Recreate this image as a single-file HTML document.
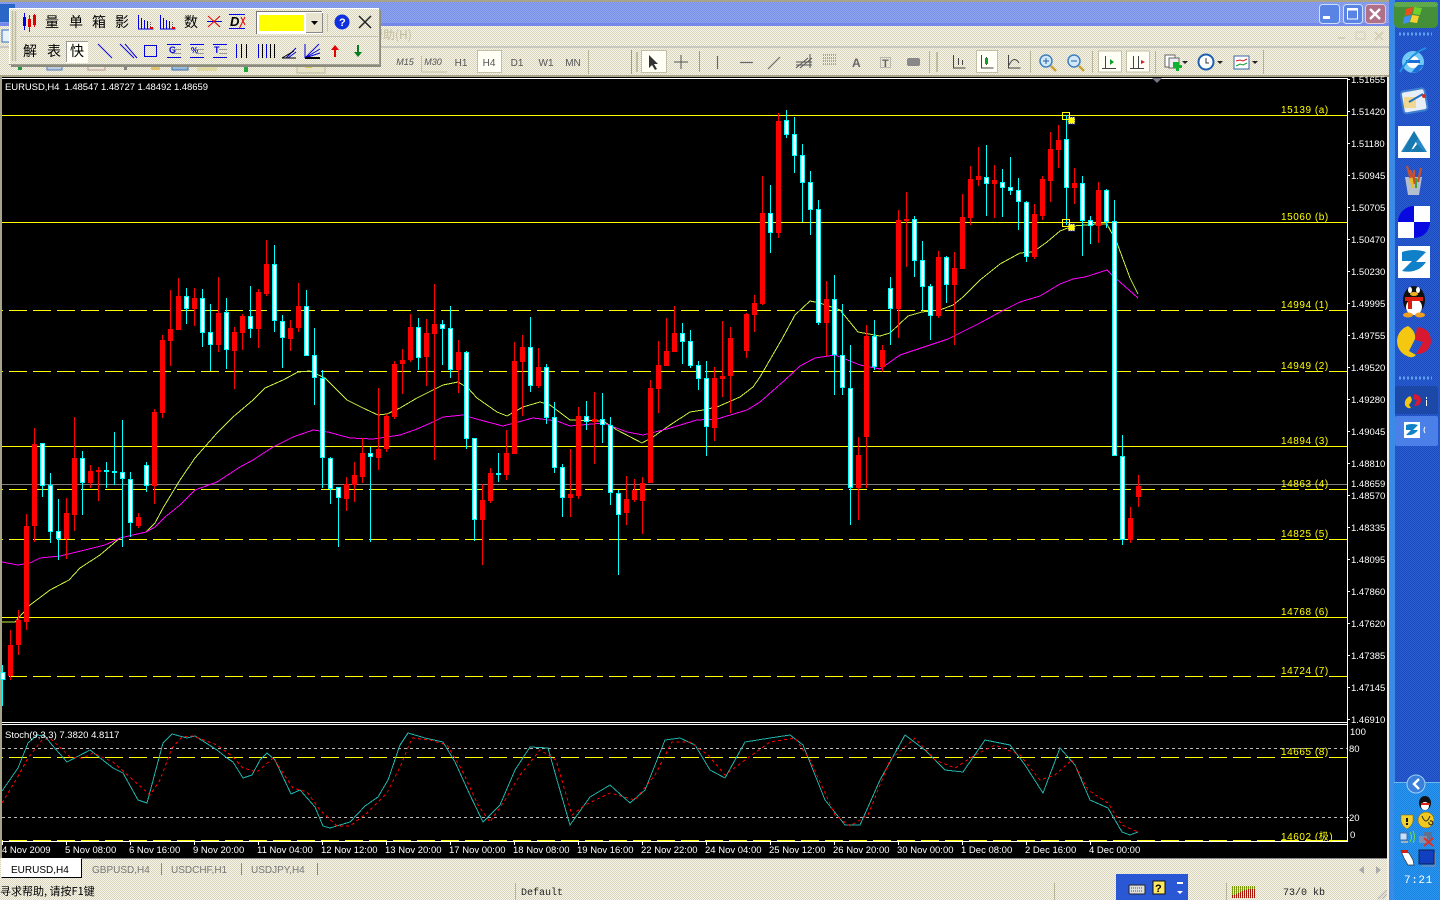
<!DOCTYPE html>
<html><head><meta charset="utf-8"><title>MetaTrader EURUSD,H4</title>
<style>html,body{margin:0;padding:0;background:#000;width:1440px;height:900px;overflow:hidden}svg{display:block}
text{font-family:"Liberation Sans","Noto Sans CJK SC",sans-serif;font-size:9.5px}
.a text{fill:#fff}.y text{fill:#ff0;font-size:10px;letter-spacing:.55px}.c text{font-family:"Noto Sans CJK SC","WenQuanYi Zen Hei",sans-serif;font-size:14px;fill:#000;text-anchor:middle}
.t text{font-size:10px;fill:#555;text-anchor:middle}
.m text{font-family:"Liberation Mono",monospace;font-size:10px;fill:#222}
</style></head><body>
<svg width="1440" height="900" viewBox="0 0 1440 900" xmlns="http://www.w3.org/2000/svg">
<defs>
<pattern id="d" width="2" height="2" patternUnits="userSpaceOnUse"><rect width="2" height="2" fill="#f8f6ea"/><rect width="1" height="1" fill="#d8d4bc"/><rect x="1" y="1" width="1" height="1" fill="#d8d4bc"/></pattern>
<pattern id="b" width="2" height="2" patternUnits="userSpaceOnUse"><rect width="2" height="2" fill="#8ca6ee"/><rect width="1" height="1" fill="#7b90e6"/><rect x="1" y="1" width="1" height="1" fill="#7b90e6"/></pattern>
<pattern id="k" width="2" height="2" patternUnits="userSpaceOnUse"><rect width="2" height="2" fill="#2a5ed0"/><rect width="1" height="1" fill="#1c4cc0"/><rect x="1" y="1" width="1" height="1" fill="#1c4cc0"/></pattern>
<pattern id="r" width="2" height="2" patternUnits="userSpaceOnUse"><rect width="2" height="2" fill="#2a96ee"/><rect width="1" height="1" fill="#1a82e0"/><rect x="1" y="1" width="1" height="1" fill="#1a82e0"/></pattern>
</defs>
<!-- window chrome -->
<rect width="1440" height="900" fill="url(#d)"/>
<rect width="1390" height="2" fill="#a8a488"/>
<rect y="2" width="1390" height="24" fill="url(#b)"/>
<rect y="23" width="1390" height="3" fill="#7488ec"/>
<rect y="46" width="1390" height="2" fill="#c8c8c0"/>
<rect y="75" width="1390" height="2" fill="#a8a488"/>
<rect x="0" y="4" width="15" height="18" fill="#2a66c8"/>
<rect x="2" y="30" width="12" height="12" fill="#e8f0f8" stroke="#3070c0"/>
<text x="371" y="39" style="font-family:'Noto Sans CJK SC',sans-serif;font-size:12px;fill:#c0bc9c">帮助(H)</text>
<!-- window buttons -->
<rect x="1319.5" y="4.5" width="20" height="19" rx="3" fill="#5a84e4" stroke="#cfe0fa"/><rect x="1323" y="16" width="7" height="3" fill="#fff"/>
<rect x="1343.5" y="4.5" width="19" height="19" rx="3" fill="#5a84e4" stroke="#cfe0fa"/><rect x="1347.5" y="9" width="10" height="10" fill="none" stroke="#fff"/><rect x="1347" y="8" width="11" height="2.5" fill="#fff"/>
<rect x="1365.5" y="4.5" width="20" height="19" rx="3" fill="#b07088" stroke="#e0c8d8"/><path d="M1370 9l10 10M1380 9l-10 10" stroke="#fff" stroke-width="2.4"/>
<g fill="#d4d0b8"><rect x="1338" y="37" width="7" height="2"/><rect x="1356" y="32" width="9" height="7" fill="none" stroke="#d4d0b8"/><path d="M1375 32l8 8M1383 32l-8 8" stroke="#d4d0b8" stroke-width="2"/></g>
<!-- toolbar under floating -->
<g fill="#555" opacity=".9">
<rect x="18" y="65" width="4" height="5" fill="#0a9030"/><rect x="47" y="65" width="15" height="5" fill="#b8c8e0" stroke="#4070b0"/><rect x="88" y="65" width="17" height="5" fill="#f0e8e0" stroke="#b09080"/><rect x="124" y="65" width="3" height="5" fill="#777"/><rect x="151" y="65" width="9" height="5" fill="#e0c060"/><rect x="172" y="65" width="16" height="5" fill="#90b8e0" stroke="#3060a0"/><rect x="197" y="65" width="20" height="6" fill="#e0d8a0"/><rect x="244" y="65" width="4" height="7" fill="#10a030"/><rect x="237" y="65" width="16" height="2" fill="#10a030"/><rect x="297" y="65" width="28" height="8" fill="#e8e4c8" stroke="#b8b498"/><rect x="305" y="65" width="7" height="3" fill="#e0c040"/></g>
<g class="t">
<path d="M421.5 72V56M421.5 72H447" stroke="#c4c0a8" fill="none"/>
<text x="405" y="65" style="font-style:italic;font-size:9px">M15</text><text x="433" y="65" style="font-style:italic;font-size:9px">M30</text>
<text x="461" y="66">H1</text><rect x="477.5" y="50.5" width="24" height="22" fill="#fffff6" stroke="#c4c0a8"/><text x="489" y="66">H4</text><text x="517" y="66">D1</text><text x="546" y="66">W1</text><text x="573" y="66">MN</text>
</g>
<rect x="588" y="50" width="1" height="24" fill="#b8b498"/><rect x="631" y="50" width="1" height="24" fill="#999"/>
<rect x="636" y="52" width="2" height="20" fill="#c0bca0"/>
<rect x="641.5" y="50.5" width="25" height="22" fill="#fffff6" stroke="#c4c0a8"/>
<path d="M649 55l0 13 3-3 3 5 2-1-3-5 4 0z" fill="#333"/>
<path d="M681 55v14M674 62h14" stroke="#555"/>
<rect x="699" y="51" width="1" height="21" fill="#999"/>
<path d="M717.5 56v13M740 62.5h13M768 69l12-12" stroke="#666" stroke-width="1.2"/>
<path d="M796 68l12-10M800 68l12-10M796 62h16M796 65h16M810 54v14" stroke="#555" fill="none"/>
<path d="M823 55h13M823 58h13M823 61h13M823 64h13" stroke="#666" stroke-dasharray="1 1"/>
<text x="852" y="67" style="font-size:12px;font-weight:bold;fill:#666">A</text>
<rect x="880.5" y="57.5" width="10" height="10" fill="none" stroke="#888" stroke-dasharray="1 1"/><text x="882" y="67" style="font-size:11px;font-weight:bold;fill:#666">T</text>
<rect x="907" y="58" width="13" height="8" rx="2" fill="#888"/>
<rect x="929" y="51" width="1" height="22" fill="#b8b498"/><rect x="936" y="52" width="2" height="20" fill="#c0bca0"/>
<path d="M953.5 55v13h12M958.5 58v7M962.5 60v5" stroke="#444" fill="none"/>
<rect x="976.5" y="50.5" width="21" height="22" fill="#fffff6" stroke="#c4c0a8"/><path d="M981.5 55v13h12M986.5 57v8" stroke="#444" fill="none"/><rect x="985" y="58" width="3" height="6" fill="#10a030"/>
<path d="M1008.500 55v13h12M1009 65q5-10 10-2" stroke="#444" fill="none"/>
<rect x="1030" y="51" width="1" height="22" fill="#b8b498"/>
<circle cx="1046" cy="61" r="6" fill="#d0e8f8" stroke="#4080c0" stroke-width="1.5"/><path d="M1051 66l5 5" stroke="#c8a030" stroke-width="2.5"/><path d="M1043 61h6M1046 58v6" stroke="#2060a0"/>
<circle cx="1074" cy="61" r="6" fill="#d0e8f8" stroke="#4080c0" stroke-width="1.5"/><path d="M1079 66l5 5" stroke="#c8a030" stroke-width="2.5"/><path d="M1071 61h6" stroke="#2060a0"/>
<rect x="1092" y="51" width="1" height="22" fill="#b8b498"/>
<rect x="1098.5" y="51" width="23" height="21" fill="#fffff6" stroke="#c4c0a8"/><path d="M1105.5 56v12M1102 68.5h14" stroke="#444" fill="none"/><path d="M1110 59l4 3-4 3z" fill="#10a030"/>
<rect x="1126.5" y="51" width="23" height="21" fill="#fffff6" stroke="#c4c0a8"/><path d="M1133.5 56v12M1138.5 56v12M1130 68.5h14" stroke="#444" fill="none"/><path d="M1145 62l-4-2v4z" fill="#d02020"/>
<rect x="1155" y="51" width="1" height="22" fill="#b8b498"/>
<rect x="1165" y="55" width="10" height="12" fill="#fff" stroke="#666"/><rect x="1169" y="58" width="10" height="10" fill="#eee" stroke="#666"/><path d="M1173 62h6v3h3v3h-3v3h-3v-3h-3z" fill="#10b030"/><path d="M1182 61h6l-3 3z" fill="#222"/>
<circle cx="1206" cy="62" r="7.5" fill="#fff" stroke="#2060b0" stroke-width="2"/><path d="M1206 58v5h3" stroke="#333" fill="none"/><path d="M1217 61h6l-3 3z" fill="#222"/>
<rect x="1234" y="56" width="15" height="13" fill="#fff" stroke="#3868a0"/><path d="M1236 61l4-1 3 1 4-2" stroke="#d02020" fill="none"/><path d="M1236 66l4-2 3 1 4-2" stroke="#10a030" fill="none"/><path d="M1252 61h6l-3 3z" fill="#222"/>
<rect x="1263" y="50" width="1" height="24" fill="#b0b0a0"/>

<!-- black chart window -->
<rect x="0" y="77" width="2" height="781" fill="#a8a488"/>
<rect x="2" y="77" width="1385" height="781" fill="#000"/>
<rect x="2" y="78" width="1346" height="1" fill="#fff"/>
<rect x="1347" y="78" width="1" height="764" fill="#fff"/>
<rect x="2" y="722" width="1346" height="1" fill="#fff"/><rect x="2" y="724" width="1346" height="1" fill="#fff"/>
<rect x="2" y="841" width="1346" height="1" fill="#fff"/>
<path d="M1152 78h10l-5 5z" fill="#778"/>

<!-- horizontal levels -->
<g shape-rendering="crispEdges" fill="none">
<path d="M2 484.5H1347" stroke="#808080"/>
<path d="M2 115.5H1347M2 222.5H1347M2 446.5H1347M2 617.5H1347" stroke="#ff0"/>
<path d="M9 310.5H1347M9 371.5H1347M9 489.5H1347M9 539.5H1347M9 676.5H1347M9 757.5H1347M9 840.5H1347" stroke="#ff0" stroke-dasharray="18 6"/>
<path d="M2 310.500h1M2 371.500h1M2 489.500h1M2 539.500h1M2 676.500h1M2 757.500h1M2 840.500h1" stroke="#ff0"/>
<path d="M2 748.5H1347M2 817.5H1347" stroke="#bbb" stroke-dasharray="3 3"/>
</g>

<!-- moving averages -->
<g fill="none" stroke-width="1" shape-rendering="crispEdges">
<path stroke="#c8f040" d="M2 622L15 622 30 605 50 590 69 580 80 568 100 555 120 538 146 532 155 523 163 508 180 480 195 458 217 433 233 417 253 400 265 388 283 380 298 372 310 371 325 378 347 400 363 408 378 415 387 414 400 408 417 398 433 390 443 385 458 382 468 388 477 398 497 412 507 416 523 407 540 402 550 405 570 420 603 421 617 430 642 443 653 437 670 425 690 412 703 410 717 407 740 397 753 387 760 377 782 339 795 315 810 301 820 303 840 310 858 332 880 336 890 333 908 316 922 312 940 310 953 305 963 297 980 280 1000 264 1020 253 1033 252 1047 242 1060 231 1073 226 1097 224 1107 224 1117 243 1130 278 1138 294"/>
<path stroke="#ff00ff" d="M2 562L18 565 30 563 40 558 60 556 85 550 105 545 120 538 146 532 155 527 165 517 180 505 195 490 217 482 240 467 253 460 273 447 293 437 313 430 328 432 350 438 373 439 400 435 417 429 433 422 443 417 463 415 480 420 503 426 533 418 557 421 570 426 603 423 627 432 643 435 667 429 697 420 717 419 747 410 760 402 785 380 800 366 815 358 835 355 860 365 880 369 900 355 930 345 948 339 980 323 1000 312 1020 302 1040 296 1060 284 1073 279 1085 277 1107 270 1112 275 1138 298"/>
</g>

<!-- candles -->
<g shape-rendering="crispEdges">
<path stroke="#f00" fill="none" d="M10.5 630V680M18.5 610V655M26.5 514V630M34.5 428V542M66.5 498V559M74.5 417V531M90.5 465V488M98.5 467V501M138.5 513V528M154.5 409V504M162.5 335V418M170.5 290V366M178.5 278V330M194.5 288V326M218.5 277V352M234.5 327V389M242.5 314V350M258.5 289V348M266.5 240V296M290.5 320V351M298.5 283V332M346.5 477V511M354.5 462V502M362.5 438V483M378.5 388V470M386.5 414V452M394.5 361V419M402.5 349V394M410.5 314V362M426.5 319V386M434.5 284V460M458.5 340V393M482.5 484V565M490.5 468V503M506.5 430V480M514.5 342V454M522.5 335V416M538.5 348V388M570.5 449V517M578.5 407V499M594.5 392V464M626.5 476V525M634.5 479V502M642.5 477V534M650.5 380V483M658.5 341V413M666.5 318V366M674.5 306V352M714.5 367V441M722.5 321V397M730.5 327V413M746.5 313V358M754.5 295V332M762.5 176V305M778.5 113V238M826.5 281V356M858.5 437V520M866.5 325V488M882.5 345V372M898.5 210V338M906.5 192V267M938.5 251V318M954.5 252V345M962.5 194V269M970.5 166V225M978.5 147V186M994.5 165V218M1034.5 204V259M1042.5 176V220M1050.5 132V202M1058.5 125V168M1074.5 168V204M1098.5 182V243M1130.5 507V543M1138.5 475V507"/>
<path stroke="#0ff" fill="none" d="M2.5 665V706M42.5 443V497M50.5 473V543M58.5 499V560M82.5 451V515M106.5 462V488M114.5 432V485M122.5 420V547M130.5 472V537M146.5 462V492M186.5 288V324M202.5 289V347M210.5 304V371M226.5 298V369M250.5 286V338M274.5 245V332M282.5 315V368M306.5 290V356M314.5 328V405M322.5 370V488M330.5 457V504M338.5 487V547M370.5 447V542M418.5 318V370M442.5 320V365M450.5 306V378M466.5 351V449M474.5 438V541M498.5 453V482M530.5 317V392M546.5 364V424M554.5 402V473M562.5 464V517M586.5 401V430M602.5 393V443M610.5 417V505M618.5 490V575M682.5 323V364M690.5 330V368M698.5 361V390M706.5 361V456M770.5 185V253M786.5 110V138M794.5 117V173M802.5 144V222M810.5 171V235M818.5 200V325M834.5 275V395M842.5 304V395M850.5 345V525M874.5 320V370M890.5 277V345M914.5 216V277M922.5 241V310M930.5 284V340M946.5 256V303M986.5 145V216M1002.5 169V217M1010.5 157V195M1018.5 178V230M1026.5 201V262M1066.5 115V225M1082.5 176V256M1090.5 216V244M1106.5 189V228M1114.5 200V456M1122.5 435V545"/>
<path fill="#f00" d="M8 645h5v31h-5zM16 620h5v25h-5zM24 526h5v96h-5zM32 444h5v82h-5zM64 513h5v26h-5zM72 458h5v57h-5zM88 471h5v12h-5zM96 470h5v2h-5zM136 517h5v9h-5zM152 412h5v74h-5zM160 340h5v73h-5zM168 329h5v12h-5zM176 296h5v34h-5zM192 298h5v11h-5zM216 313h5v32h-5zM232 332h5v19h-5zM240 316h5v17h-5zM256 292h5v37h-5zM264 264h5v30h-5zM288 328h5v11h-5zM296 306h5v22h-5zM344 484h5v15h-5zM352 475h5v10h-5zM360 453h5v24h-5zM376 449h5v9h-5zM384 416h5v33h-5zM392 364h5v53h-5zM400 360h5v4h-5zM408 327h5v33h-5zM424 333h5v24h-5zM432 324h5v10h-5zM456 352h5v18h-5zM480 500h5v20h-5zM488 473h5v28h-5zM504 453h5v22h-5zM512 361h5v93h-5zM520 347h5v15h-5zM536 367h5v19h-5zM568 494h5v4h-5zM576 416h5v80h-5zM592 419h5v3h-5zM624 499h5v14h-5zM632 490h5v10h-5zM640 483h5v18h-5zM648 388h5v95h-5zM656 365h5v24h-5zM664 351h5v15h-5zM672 333h5v19h-5zM712 378h5v50h-5zM720 376h5v3h-5zM728 338h5v38h-5zM744 314h5v37h-5zM752 303h5v12h-5zM760 213h5v91h-5zM776 121h5v112h-5zM824 299h5v24h-5zM856 455h5v33h-5zM864 336h5v101h-5zM880 350h5v17h-5zM896 220h5v89h-5zM904 219h5v2h-5zM936 257h5v59h-5zM952 268h5v17h-5zM960 217h5v52h-5zM968 179h5v39h-5zM976 176h5v4h-5zM992 180h5v4h-5zM1032 214h5v43h-5zM1040 179h5v37h-5zM1048 149h5v32h-5zM1056 140h5v10h-5zM1072 183h5v5h-5zM1096 190h5v36h-5zM1128 518h5v22h-5zM1136 486h5v11h-5z"/>
<path fill="#fff" stroke="#0ff" d="M1 672.5h4v7h-4zM40.5 443.5h4v42h-4zM48.5 485.5h4v46h-4zM56.5 531.5h4v7h-4zM80.5 458.5h4v24h-4zM104.5 470.5h4v1h-4zM112.5 471.5h4v1h-4zM120.5 472.5h4v6h-4zM128.5 479.5h4v43h-4zM144.5 465.5h4v20h-4zM184.5 296.5h4v12h-4zM200.5 298.5h4v34h-4zM208.5 332.5h4v12h-4zM224.5 312.5h4v37h-4zM248.5 316.5h4v12h-4zM272.5 264.5h4v56h-4zM280.5 321.5h4v16h-4zM304.5 306.5h4v49h-4zM312.5 355.5h4v22h-4zM320.5 378.5h4v79h-4zM328.5 458.5h4v30h-4zM336.5 487.5h4v10h-4zM368.5 453.5h4v3h-4zM416.5 327.5h4v30h-4zM440.5 324.5h4v4h-4zM448.5 328.5h4v41h-4zM464.5 352.5h4v86h-4zM472.5 438.5h4v81h-4zM496.5 473.5h4v1h-4zM528.5 347.5h4v38h-4zM544.5 367.5h4v50h-4zM552.5 417.5h4v50h-4zM560.5 467.5h4v30h-4zM584.5 416.5h4v5h-4zM600.5 419.5h4v5h-4zM608.5 425.5h4v67h-4zM616.5 493.5h4v21h-4zM680.5 333.5h4v8h-4zM688.5 341.5h4v24h-4zM696.5 365.5h4v13h-4zM704.5 378.5h4v48h-4zM768.5 213.5h4v19h-4zM784.5 120.5h4v14h-4zM792.5 134.5h4v21h-4zM800.5 155.5h4v27h-4zM808.5 182.5h4v27h-4zM816.5 209.5h4v113h-4zM832.5 299.5h4v55h-4zM840.5 355.5h4v32h-4zM848.5 388.5h4v99h-4zM872.5 336.5h4v30h-4zM888.5 288.5h4v20h-4zM912.5 219.5h4v41h-4zM920.5 260.5h4v26h-4zM928.5 286.5h4v29h-4zM944.5 257.5h4v27h-4zM984.5 177.5h4v6h-4zM1000.5 182.5h4v5h-4zM1008.5 187.5h4v3h-4zM1016.5 190.5h4v11h-4zM1024.5 202.5h4v54h-4zM1064.5 139.5h4v48h-4zM1080.5 183.5h4v37h-4zM1088.5 220.5h4v5h-4zM1104.5 190.5h4v31h-4zM1112.5 221.5h4v234h-4zM1120.5 456.5h4v83h-4z"/>
</g>
<!-- object anchors -->
<g shape-rendering="crispEdges">
<rect x="1062.5" y="112.5" width="7" height="7" fill="none" stroke="#ff0"/><rect x="1062.5" y="219.5" width="7" height="7" fill="none" stroke="#ff0"/>
<rect x="1068" y="117" width="7" height="7" fill="#ff0" stroke="#22a" stroke-dasharray="1 1"/><rect x="1068" y="224" width="7" height="7" fill="#ff0" stroke="#22a" stroke-dasharray="1 1"/>
</g>

<!-- stochastic -->
<path fill="none" stroke="#20b2aa" shape-rendering="crispEdges" d="M2 791L18 768 28 743 37 735 45 736 52 745 67 762 90 750 113 768 123 773 138 800 147 803 163 743 172 734 187 738 195 736 217 750 227 758 233 762 243 778 252 775 260 760 267 753 275 760 291 794 300 790 315 807 323 826 330 828 350 822 365 806 378 797 388 780 400 745 408 733 425 738 443 742 455 762 470 795 483 822 500 805 515 770 530 747 548 748 557 780 570 825 590 797 610 785 630 803 645 790 665 740 680 738 695 745 710 770 725 778 745 742 770 738 790 735 803 745 825 800 845 825 860 825 880 780 905 735 925 750 945 770 963 772 985 740 1010 745 1025 765 1043 793 1060 748 1075 765 1090 800 1108 808 1122 832 1130 835 1138 832"/>
<path fill="none" stroke="#f00" stroke-dasharray="3 3" shape-rendering="crispEdges" d="M2 803L17 778 28 758 42 740 50 738 70 757 83 758 93 753 113 762 133 780 150 795 160 780 172 748 182 737 193 736 217 745 233 757 243 768 257 772 273 758 293 788 307 792 320 810 337 826 350 826 367 813 387 793 400 767 412 738 430 740 447 745 462 770 478 805 490 822 505 800 520 775 540 750 556 760 572 815 585 805 610 793 635 800 655 775 672 742 690 742 708 755 725 775 745 760 770 742 795 738 810 760 835 815 850 826 868 815 890 760 915 738 935 760 955 768 975 755 995 745 1020 755 1040 780 1055 775 1072 760 1088 790 1108 803 1122 825 1138 832"/>

<!-- labels -->
<g class="a">
<text x="5" y="90" style="letter-spacing:-.06px">EURUSD,H4&#160; 1.48547 1.48727 1.48492 1.48659</text>
<text x="5" y="738">Stoch(9,3,3) 7.3820 4.8117</text>
<text x="1351" y="83">1.51655</text><text x="1351" y="115">1.51420</text><text x="1351" y="147">1.51180</text><text x="1351" y="179">1.50945</text><text x="1351" y="211">1.50705</text><text x="1351" y="243">1.50470</text><text x="1351" y="275">1.50230</text><text x="1351" y="307">1.49995</text><text x="1351" y="339">1.49755</text><text x="1351" y="371">1.49520</text><text x="1351" y="403">1.49280</text><text x="1351" y="435">1.49045</text><text x="1351" y="467">1.48810</text><text x="1351" y="487">1.48659</text><text x="1351" y="499">1.48570</text><text x="1351" y="531">1.48335</text><text x="1351" y="563">1.48095</text><text x="1351" y="595">1.47860</text><text x="1351" y="627">1.47620</text><text x="1351" y="659">1.47385</text><text x="1351" y="691">1.47145</text><text x="1351" y="723">1.46910</text>
<text x="1350" y="735">100</text><text x="1349" y="752">80</text><text x="1349" y="821">20</text><text x="1350" y="838">0</text>
<text x="2" y="853">4 Nov 2009</text><text x="65" y="853">5 Nov 08:00</text><text x="129" y="853">6 Nov 16:00</text><text x="193" y="853">9 Nov 20:00</text><text x="257" y="853">11 Nov 04:00</text><text x="321" y="853">12 Nov 12:00</text><text x="385" y="853">13 Nov 20:00</text><text x="449" y="853">17 Nov 00:00</text><text x="513" y="853">18 Nov 08:00</text><text x="577" y="853">19 Nov 16:00</text><text x="641" y="853">22 Nov 22:00</text><text x="705" y="853">24 Nov 04:00</text><text x="769" y="853">25 Nov 12:00</text><text x="833" y="853">26 Nov 20:00</text><text x="897" y="853">30 Nov 00:00</text><text x="961" y="853">1 Dec 08:00</text><text x="1025" y="853">2 Dec 16:00</text><text x="1089" y="853">4 Dec 00:00</text>
</g>
<path stroke="#fff" shape-rendering="crispEdges" d="M1347 79.5h3M1347 111.5h3M1347 143.5h3M1347 175.5h3M1347 207.5h3M1347 239.5h3M1347 271.5h3M1347 303.5h3M1347 335.5h3M1347 367.5h3M1347 399.5h3M1347 431.5h3M1347 463.5h3M1347 495.5h3M1347 527.5h3M1347 559.5h3M1347 591.5h3M1347 623.5h3M1347 655.5h3M1347 687.5h3M1347 719.5h3M1347 817.5h2M2.5 842v3M66.5 842v3M130.5 842v3M194.5 842v3M258.5 842v3M322.5 842v3M386.5 842v3M450.5 842v3M514.5 842v3M578.5 842v3M642.5 842v3M706.5 842v3M770.5 842v3M834.5 842v3M898.5 842v3M962.5 842v3M1026.5 842v3M1090.5 842v3"/>
<g class="y">
<text x="1281" y="113">15139 (a)</text><text x="1281" y="220">15060 (b)</text><text x="1281" y="308">14994 (1)</text><text x="1281" y="369">14949 (2)</text><text x="1281" y="444">14894 (3)</text><text x="1281" y="487">14863 (4)</text><text x="1281" y="537">14825 (5)</text><text x="1281" y="615">14768 (6)</text><text x="1281" y="674">14724 (7)</text><text x="1281" y="755">14665 (8)</text><text x="1281" y="840">14602 (极)</text>
</g>

<!-- bottom tabs and status -->
<rect x="0" y="858" width="1387" height="42" fill="url(#d)"/>
<rect x="1" y="858" width="80" height="20" fill="#fff"/><path d="M1.5 877.5H81.5V858" stroke="#000" fill="none"/>
<rect x="81" y="858" width="1306" height="1" fill="#888"/>
<text x="11" y="873" fill="#000" style="font-size:10px">EURUSD,H4</text>
<g style="fill:#777"><text x="92" y="873" fill="#777" style="font-size:10px">GBPUSD,H4</text><text x="171" y="873" fill="#777" style="font-size:10px">USDCHF,H1</text><text x="251" y="873" fill="#777" style="font-size:10px">USDJPY,H4</text></g>
<path d="M161.5 863v12M241.5 863v12M317.5 863v12" stroke="#888"/>
<text x="0" y="895" fill="#000" style="font-family:'Noto Sans CJK SC',sans-serif;font-size:11px">寻求帮助, 请按F1键</text>
<path d="M515.500 883v17M1054.500 883v17M1226.500 883v17" stroke="#b8b498"/>
<g class="m"><text x="521" y="895">Default</text><text x="1283" y="895">73/0 kb</text></g>
<path d="M1364 866l-5 4 5 4zM1376 866l5 4-5 4z" fill="#aaa"/>
<!-- IME bar -->
<rect x="1116" y="874" width="72" height="26" fill="#2a58d4"/>
<rect x="1129" y="885" width="16" height="9" rx="1" fill="#ddd" stroke="#222"/><path d="M1131 888h12M1131 891h12" stroke="#555" stroke-dasharray="1 1"/>
<rect x="1153" y="881" width="12" height="13" fill="#ffe860" stroke="#111"/><text x="1155" y="892" style="font-size:11px;font-weight:bold;fill:#000">?</text>
<rect x="1177" y="882" width="6" height="2" fill="#fff"/><path d="M1177 891h6l-3 3z" fill="#fff"/>
<!-- net bars -->
<g shape-rendering="crispEdges"><path d="M1232.500 886v12M1234.500 886v12M1236.500 886v12M1238.500 886v12M1240.500 886v12M1242.500 886v12M1244.500 886v12M1246.500 886v12M1248.500 886v12M1250.500 886v12M1252.500 886v12M1254.500 886v12" stroke="#7c9a10"/>
<path d="M1232.500 895v3M1234.500 895v3M1236.500 894v4M1238.500 893v5M1240.500 892v6M1242.500 891v7M1244.500 890v8M1246.500 890v8M1248.500 889v9M1250.500 889v9M1252.500 889v9M1254.500 889v9" stroke="#a81808"/></g>
<path d="M1378 899l9-9M1382 899l5-5" stroke="#aaa"/>

<!-- taskbar -->
<rect x="1387" y="77" width="3" height="823" fill="#f0f0e8"/>
<rect x="1389" y="0" width="51" height="900" fill="url(#k)"/>
<rect x="1389" y="0" width="6" height="900" fill="#3a8ae8"/>
<rect x="1394" y="782" width="46" height="118" fill="url(#r)"/>
<rect x="1394" y="782" width="46" height="1" fill="#70b8f0"/>
<rect x="1394" y="2" width="44" height="26" rx="5" fill="#458f38"/><rect x="1394" y="2" width="44" height="5" rx="3" fill="#5ea84e"/>
<path d="M1406 9l7-2-1 7-7 2z" fill="#e85020"/><path d="M1414 7l8 1-2 7-7-1z" fill="#70d030"/><path d="M1404 17l7-2-1 7-7 2z" fill="#4090f0"/><path d="M1412 15l7 1-2 7-7-1z" fill="#f8d030"/>
<path d="M1399 34h33" stroke="#60a0f0" stroke-width="3" stroke-dasharray="2 2"/>
<!-- IE -->
<circle cx="1413" cy="62" r="11" fill="#70c8f8"/><circle cx="1413" cy="62" r="6" fill="#fff"/><rect x="1406" y="60" width="14" height="3" fill="#1a70d8"/><path d="M1418 65h6l-6 7-7 1z" fill="#1a70d8"/><path d="M1400 72q10-18 26-24" stroke="#2090e0" stroke-width="2" fill="none"/>
<rect x="1402" y="90" width="24" height="22" rx="3" fill="#e8eef8" stroke="#4080d0" stroke-width="2" transform="rotate(-10 1413 100)"/><rect x="1404" y="97" width="12" height="11" fill="#f0d890"/><path d="M1409 102l14-8" stroke="#2070c0" stroke-width="2"/><circle cx="1424" cy="96" r="2" fill="#d03020"/>
<!-- tri -->
<rect x="1398" y="126" width="32" height="32" fill="#fff"/><path d="M1414 131l-13 21h26zM1414 139l-6 10h12z" fill="#2a88c8" fill-rule="evenodd"/><path d="M1414 131l4 7-8 14-7 0zM1417 144l8 8h-14z" fill="#1878b0"/>
<!-- pens -->
<path d="M1405 177h17l-3 18h-11z" fill="#d8d8d0" opacity=".8"/><path d="M1407 166l4 14M1414 170v14M1421 168l-3 14M1410 170l6 14" stroke="#c85030" stroke-width="2.2"/><path d="M1411 178l2 10" stroke="#e8c020" stroke-width="3"/><path d="M1416 178l0 10" stroke="#40a040" stroke-width="2"/>
<!-- disk -->
<circle cx="1414" cy="222" r="16" fill="#0808e0"/><rect x="1414" y="206" width="16" height="16" fill="#fff"/><rect x="1398" y="222" width="16" height="16" fill="#fff"/>
<!-- Z -->
<rect x="1398" y="246" width="32" height="32" fill="#fff"/><path d="M1402 252q12-4 24 0l-10 10h10q-8 12-24 9l10-10h-10z" fill="#1080c8"/>
<!-- penguin -->
<ellipse cx="1414" cy="300" rx="11" ry="14" fill="#111"/><ellipse cx="1414" cy="307" rx="8" ry="8" fill="#fff"/><rect x="1405" y="297" width="18" height="4" fill="#e02010"/><rect x="1408" y="300" width="4" height="9" fill="#d02010"/><ellipse cx="1410" cy="290" rx="2" ry="3" fill="#fff"/><ellipse cx="1418" cy="290" rx="2" ry="3" fill="#fff"/><ellipse cx="1414" cy="294" rx="4" ry="2" fill="#f0b020"/><ellipse cx="1408" cy="315" rx="5" ry="2.5" fill="#f0a020"/><ellipse cx="1420" cy="315" rx="5" ry="2.5" fill="#f0a020"/>
<!-- round logo -->
<path d="M1408 326a16 16 0 0 0-1 30q5 3 9-1l-7-4 6-12q1-8-7-13z" fill="#f4c810"/><path d="M1417 327l-2 13 8 2-7 12q13 0 15-12 0-14-14-15z" fill="#d81830"/>
<path d="M1399 378h33" stroke="#60a0f0" stroke-width="3" stroke-dasharray="2 2"/>
<rect x="1395" y="386" width="43" height="28" rx="2" fill="#1c48a8"/>
<path d="M1410 396q-6 3-5 9 2 4 6 3l-2-3 2-3q2-3-1-6z" fill="#f4c810"/><path d="M1414 394l-1 5 4 1-3 6q7 0 7-6 0-5-7-6z" fill="#d81830"/><rect x="1426" y="397" width="1" height="2" fill="#fff"/><rect x="1426" y="400" width="1" height="6" fill="#fff"/>
<rect x="1395" y="416" width="43" height="30" rx="2" fill="#4a80e8"/>
<rect x="1404" y="422" width="16" height="16" fill="#fff"/><path d="M1406 425q6-2 12 0l-5 5h5q-4 6-12 5l5-5h-5z" fill="#1080c8"/><path d="M1425 427q-2 3 0 6" stroke="#fff" fill="none"/>
<!-- tray -->
<circle cx="1416" cy="784" r="9" fill="#3a80d8" stroke="#a0d0f8"/><path d="M1419 779l-5 5 5 5" stroke="#fff" stroke-width="2.4" fill="none"/>
<ellipse cx="1425" cy="803" rx="6" ry="7" fill="#111"/><ellipse cx="1425" cy="806" rx="4" ry="4" fill="#fff"/><rect x="1421" y="803" width="9" height="2" fill="#e02010"/>
<path d="M1401 815h12v6q-1 5-6 8-5-3-6-8z" fill="#f0d030" stroke="#806010" stroke-width=".5"/><rect x="1406" y="818" width="2" height="4" fill="#111"/><rect x="1406" y="823" width="2" height="2" fill="#111"/>
<circle cx="1426" cy="820" r="8" fill="#f0c820" stroke="#806010" stroke-width=".5"/><path d="M1422 816q4 10 8 0M1430 821a2 2 0 1 1-1 1" stroke="#222" fill="none"/>
<rect x="1400" y="833" width="7" height="7" fill="#c8e0f8" stroke="#4070b0"/><path d="M1410 832q3 5 0 10M1413 831q3 6 0 12" stroke="#70e040" fill="none"/><rect x="1401" y="841" width="7" height="2" fill="#a0b0c0"/>
<rect x="1424" y="832" width="8" height="7" fill="#607090"/><rect x="1419" y="836" width="8" height="7" fill="#8090b0"/><path d="M1424 838l9 8M1433 838l-9 8" stroke="#e03020" stroke-width="2"/>
<path d="M1401 851l8 2 4 7 1 5h-6l-4-7z" fill="#fff" stroke="#333" stroke-width=".7"/><rect x="1401" y="850" width="7" height="3" fill="#d02010"/>
<rect x="1419" y="850" width="15" height="14" fill="#1040c0" stroke="#102050"/><path d="M1422 866h13v-13" stroke="#88a" fill="none"/>
<text x="1404" y="883" style="font-family:'Liberation Mono',monospace;font-size:11px;fill:#fff;letter-spacing:.6px">7:21</text>

<!-- floating toolbar -->
<rect x="11" y="10" width="370" height="57" fill="#8c8a7c"/>
<rect x="9" y="8" width="370" height="56" fill="url(#d)"/>
<path d="M9.5 64V8.5H379" stroke="#fff" fill="none"/><path d="M379.500 8v56.500H9" stroke="#a0a090" fill="none"/>
<path d="M12.500 11v50M15.500 11v50" stroke="#c0bca0" stroke-width="1.500"/>
<path d="M20 36.500h358" stroke="#c8c4b0"/>
<!-- row1 -->
<rect x="23" y="17" width="3" height="9" fill="#0000e0"/><path d="M24.500 13v17" stroke="#0000e0"/>
<rect x="28" y="19" width="3" height="8" fill="#e00000"/><path d="M29.500 15v17" stroke="#e00000"/>
<rect x="33" y="15" width="3" height="10" fill="#e00000"/><path d="M34.500 14v13" stroke="#e00000"/>
<g class="c"><text x="52" y="27">量</text><text x="76" y="27">单</text><text x="99" y="27">箱</text><text x="122" y="27">影</text><text x="191" y="27">数</text>
<text x="30" y="56">解</text><text x="54" y="56">表</text></g>
<path d="M138.500 15v14h15M141.500 18v11M144.500 20v9M147.500 21v8" stroke="#0000e0" fill="none"/><path d="M150.500 22v7" stroke="#555" stroke-dasharray="1 1"/><rect x="150" y="27" width="3" height="2" fill="#e00000"/>
<path d="M160.500 15v14h15M163.500 18v11M166.500 20v9M169.500 21v8" stroke="#0000e0" fill="none"/><path d="M172.500 22v7" stroke="#555" stroke-dasharray="1 1"/><rect x="172" y="27" width="3" height="2" fill="#e00000"/>
<path d="M207 21.500h15" stroke="#0000e0"/><path d="M208 16l12 11M220 16l-12 11" stroke="#e00000"/>
<path d="M229 14.500h16M229 28.500h16" stroke="#0000e0"/><text x="230" y="26" style="font-size:13px;font-weight:bold;font-style:italic;fill:#000">D</text><path d="M241 17l4 8M245 17l-6 12" stroke="#e00000"/>
<rect x="256" y="11" width="67" height="23" fill="#fff"/><path d="M256.500 34V11.500H322" stroke="#777" fill="none"/>
<rect x="258.500" y="14.500" width="46" height="17" fill="#ff0" stroke="#fff"/>
<rect x="306" y="13" width="16" height="19" fill="#e8e4d0"/><path d="M306 32.500h17M322.500 13v20" stroke="#888"/><path d="M311 21h7l-3.500 4z" fill="#000"/>
<rect x="327" y="14" width="1" height="18" fill="#c8c4b0"/>
<circle cx="342" cy="22" r="7.500" fill="#1030e0"/><text x="339" y="26" style="font-size:11px;font-weight:bold;fill:#fff">?</text>
<path d="M359 16l12 12M371 16l-12 12" stroke="#222" stroke-width="1.500"/>
<!-- row2 -->
<rect x="66" y="41" width="22" height="22" fill="#fffff6"/><path d="M66.500 62V41.500H88" stroke="#999" fill="none"/>
<text x="77" y="56" style="font-family:'Noto Sans CJK SC',sans-serif;font-size:14px;text-anchor:middle;fill:#000">快</text>
<g fill="none" stroke="#0000e0">
<path d="M98 44l14 14"/><path d="M120 44l14 14M125 44l12 14"/>
<rect x="144.500" y="45.500" width="12" height="11"/>
<path d="M167 44.500h14M167 57.500h14"/><path d="M190 44.500h14M190 57.500h14"/><path d="M213 44.500h14M213 57.500h14"/>
<path d="M236.500 44v14"/><path d="M258.500 44v14M266.500 44v14"/>
<path d="M286 58l10-10M288 58l8-6"/><path d="M305 44v14M305 58l14-14M305 58l15-9M305 58l15-5"/>
</g>
<text x="169" y="53" style="font-size:9px;font-weight:bold;fill:#0000e0">G</text><text x="191" y="53" style="font-size:8px;font-weight:bold;fill:#0000e0">%</text><text x="214" y="53" style="font-size:9px;font-weight:bold;fill:#0000e0">T</text>
<path d="M172 49.500h9M172 53.500h9M196 49.500h8M196 53.500h8M219 49.500h8M219 53.500h8" stroke="#999"/>
<path d="M241.500 44v14M246.500 44v14M262.500 44v14M270.500 44v14M274.500 44v14" stroke="#000"/>
<path d="M282 58l12-7M282 58h14" stroke="#000"/><path d="M305 58h15" stroke="#000" stroke-width="2"/>
<path d="M335 45l4 5h-3v7h-2v-7h-3z" fill="#e00000"/><path d="M357 45h2v7h3l-4 5-4-5h3z" fill="#0a7a20"/>
</svg>
</body></html>
